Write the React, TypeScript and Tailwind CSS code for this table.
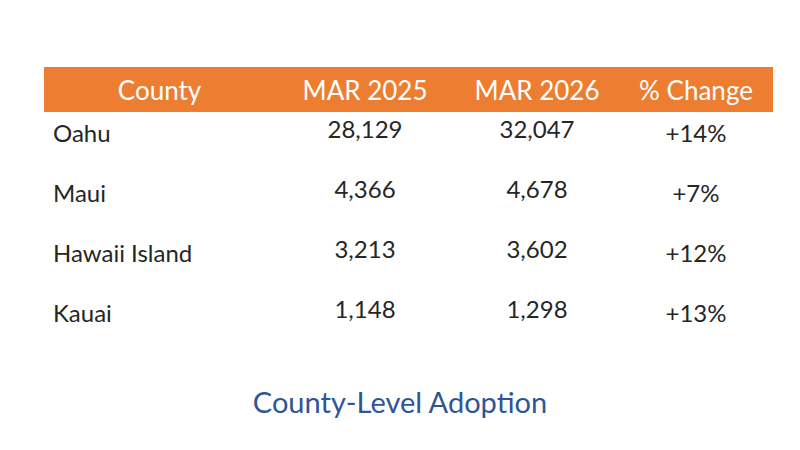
const rows = [
  { county: "Oahu", a: "28,129", b: "32,047", change: "+14%" },
  { county: "Maui", a: "4,366", b: "4,678", change: "+7%" },
  { county: "Hawaii Island", a: "3,213", b: "3,602", change: "+12%" },
  { county: "Kauai", a: "1,148", b: "1,298", change: "+13%" },
];

const cols = "grid grid-cols-[231px_180px_164px_154px]";

export default function App() {
  return (
    <main className="flex h-[450px] w-[800px] flex-col bg-white font-['Lato',sans-serif] text-[#262626]">
      <div className="ml-[44px] mt-[67px] w-[729px]">
        <div className={`${cols} h-[45px] items-center bg-[#ED7D31] text-[26px] leading-none text-white`}>
          <div className="text-center">County</div>
          <div className="text-center">MAR 2025</div>
          <div className="text-center">MAR 2026</div>
          <div className="text-center">% Change</div>
        </div>
        {rows.map((row) => (
          <div key={row.county} className={`${cols} h-[60px] items-start text-[24px] leading-none`}>
            <div className="pl-[9px] pt-[9px]">{row.county}</div>
            <div className="pt-[5px] text-center">{row.a}</div>
            <div className="pt-[5px] text-center">{row.b}</div>
            <div className="pt-[9px] text-center">{row.change}</div>
          </div>
        ))}
      </div>
      <p className="mt-[35px] text-center text-[29px] leading-none text-[#2F5597]">County-Level Adoption</p>
    </main>
  );
}
